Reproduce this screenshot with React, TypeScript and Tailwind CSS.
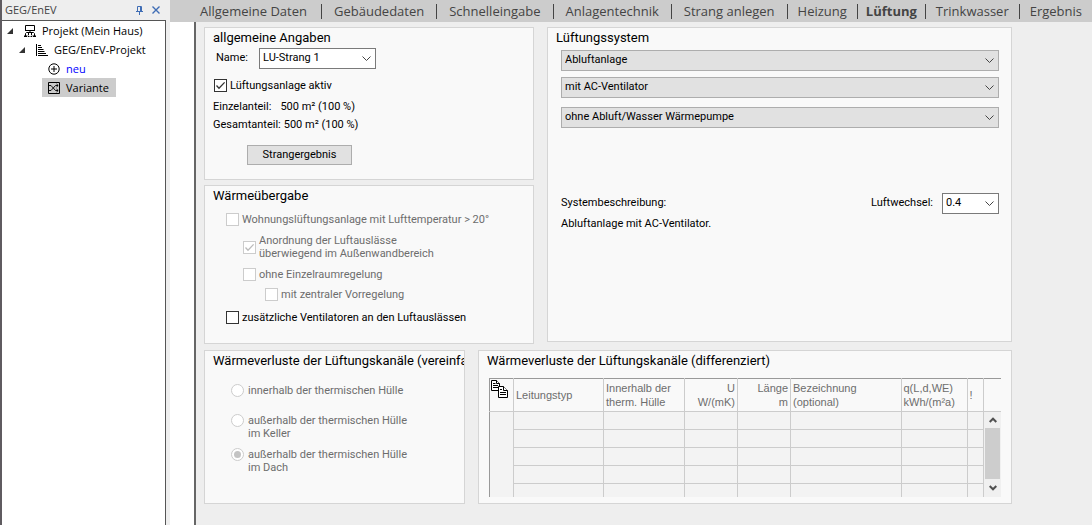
import { useState } from "react";
import type { ReactNode } from "react";
import clsx from "clsx";

const tabs = [
  { name: "Allgemeine Daten", pad: "pr-[14px]" },
  { name: "Gebäudedaten", pad: "px-3" },
  { name: "Schnelleingabe", pad: "px-3" },
  { name: "Anlagentechnik", pad: "px-3" },
  { name: "Strang anlegen", pad: "px-3" },
  { name: "Heizung", pad: "px-[10px]" },
  { name: "Lüftung", pad: "px-2" },
  { name: "Trinkwasser", pad: "px-[10px]" },
  { name: "Ergebnis", pad: "px-[10px]" },
];

function Panel({
  title,
  className,
  children,
}: {
  title: string;
  className?: string;
  children: ReactNode;
}) {
  return (
    <section
      className={clsx(
        "overflow-hidden border border-[#d5d5d5] bg-[#f9f9f9] px-2",
        className
      )}
    >
      <h2 className="text-[13px] leading-5 whitespace-nowrap">{title}</h2>
      {children}
    </section>
  );
}

function Select({
  id,
  label,
  options,
  className,
}: {
  id: string;
  label?: string;
  options: string[];
  className?: string;
}) {
  return (
    <span className={clsx("grid h-[21px] items-center border", className)}>
      <select
        id={id}
        aria-label={label}
        className="col-start-1 row-start-1 h-full w-full appearance-none bg-transparent pr-5 pl-[3px] outline-none"
      >
        {options.map((o) => (
          <option key={o}>{o}</option>
        ))}
      </select>
      <svg
        width="9"
        height="5"
        viewBox="0 0 9 5"
        className="pointer-events-none col-start-1 row-start-1 mr-1 justify-self-end"
        fill="none"
        stroke="#444"
      >
        <path d="M0.5 0.5 4.5 4.5 8.5 0.5" />
      </svg>
    </span>
  );
}

function Checkbox({
  label,
  checked,
  disabled,
  className,
}: {
  label: ReactNode;
  checked?: boolean;
  disabled?: boolean;
  className?: string;
}) {
  return (
    <label
      className={clsx(
        "flex items-center gap-[3px] leading-[13px]",
        disabled && "text-[#6d6d6d]",
        className
      )}
    >
      <span className="grid shrink-0 place-items-center">
        <input
          type="checkbox"
          defaultChecked={checked}
          disabled={disabled}
          className="peer col-start-1 row-start-1 size-[13px] appearance-none border border-[#333] bg-white disabled:border-[#ccc]"
        />
        <svg
          width="13"
          height="13"
          viewBox="0 0 13 13"
          className="pointer-events-none invisible col-start-1 row-start-1 text-[#333] peer-checked:visible peer-disabled:text-[#bbb]"
          fill="none"
          stroke="currentColor"
          strokeWidth="1.3"
        >
          <path d="M2.5 6.5 5 9.2 10.6 3.4" />
        </svg>
      </span>
      <span>{label}</span>
    </label>
  );
}

function Radio({
  label,
  checked,
  className,
}: {
  label: ReactNode;
  checked?: boolean;
  className?: string;
}) {
  return (
    <label
      className={clsx(
        "flex items-start gap-1 leading-[13px] text-[#6d6d6d]",
        className
      )}
    >
      <span className="grid shrink-0 place-items-center">
        <input
          type="radio"
          name="kanal"
          defaultChecked={checked}
          disabled
          className="peer col-start-1 row-start-1 size-[13px] appearance-none rounded-full border border-[#ccc] bg-white"
        />
        <span className="invisible col-start-1 row-start-1 size-[7px] rounded-full bg-[#c4c4c4] peer-checked:visible" />
      </span>
      <span>{label}</span>
    </label>
  );
}

function Expander() {
  return (
    <svg width="6" height="6" viewBox="0 0 6 6" className="shrink-0">
      <path d="M6 0V6H0Z" fill="#333" />
    </svg>
  );
}

function ProjectIcon() {
  return (
    <svg
      width="12"
      height="12"
      viewBox="0 0 12 12"
      fill="none"
      stroke="#000"
      className="shrink-0"
    >
      <path d="M1.5 6V0.5H10.5V6M1 5.5H11M6 5.5V7.5M1.5 10V8.5L2.5 7.5H9.5L10.5 8.5V10M4.5 10V7.5M7.5 10V7.5" />
      <path d="M0 11.5H3M4 10.5V11.5H5.5M6.5 11.5H8V10.5M9 11.5H12M0.5 10.5H2.5M9.5 10.5H11.5" />
    </svg>
  );
}

function StairsIcon() {
  return (
    <svg
      width="12"
      height="12"
      viewBox="0 0 12 12"
      fill="none"
      stroke="#000"
      className="shrink-0"
    >
      <path d="M0.5 0V12M2 1.5H5M2 3.5H6M2 5.5H7.5M2 7.5H8.5M2 9.5H10M2 11.5H12" />
    </svg>
  );
}

function AddIcon() {
  return (
    <svg
      width="12"
      height="12"
      viewBox="0 0 12 12"
      fill="none"
      stroke="#000"
      className="shrink-0"
    >
      <circle cx="6" cy="6" r="5.2" />
      <path d="M6 3V9M3 6H9" />
    </svg>
  );
}

function VariantIcon() {
  return (
    <svg
      width="12"
      height="12"
      viewBox="0 0 12 12"
      fill="none"
      stroke="#000"
      className="shrink-0"
    >
      <path d="M0.5 0.5H11.5V11.5H0.5Z" />
      <path
        d="M1 3.5H3L7.5 8.5H10M1 8.5H3L7.5 3.5H10M8.5 2 10.2 3.5 8.5 5M8.5 7 10.2 8.5 8.5 10"
        strokeWidth="0.9"
      />
    </svg>
  );
}

function CopyIcon() {
  return (
    <svg
      width="18"
      height="18"
      viewBox="0 0 18 18"
      fill="#fff"
      stroke="#000"
      className="mt-px ml-px"
    >
      <path d="M0.5 0.5H5.5L8.5 3.5V10.5H0.5Z" />
      <path d="M5.5 0.5V3.5H8.5M2 3.5H4.5M2 5.5H7M2 7.5H7" />
      <path d="M7.5 6.5H12.5L16.5 10.5V17.5H7.5Z" />
      <path d="M12.5 6.5V10.5H16.5M9 9.5H11M9 12.5H15M9 14.5H15" />
    </svg>
  );
}

function Sidebar() {
  return (
    <aside className="flex w-[170px] shrink-0 flex-col border-l-2 border-[#5f5b60] bg-[#eee] pr-1 font-['Open_Sans','Noto_Sans',sans-serif] text-[11px]">
      <header className="flex h-5 items-center pr-[6px] pl-[3px] text-[#444]">
        <h1 className="flex-1">GEG/EnEV</h1>
        <button type="button" aria-label="Anheften">
          <svg
            width="7"
            height="9"
            viewBox="0 0 7 9"
            fill="none"
            stroke="#3f6db5"
          >
            <path d="M1.5 5.5V0.5H5.5V5.5M4.5 0.5V5.5M0 5.5H7M3.5 5.5V9" />
          </svg>
        </button>
        <button type="button" aria-label="Schließen" className="ml-[9px]">
          <svg
            width="8"
            height="8"
            viewBox="0 0 8 8"
            fill="none"
            stroke="#3f6db5"
            strokeWidth="1.4"
          >
            <path d="M0.5 0.5 7.5 7.5M7.5 0.5 0.5 7.5" />
          </svg>
        </button>
      </header>
      <ul className="flex-1 border-t border-r border-[#555] bg-white leading-[19px]">
        <li className="flex items-center pl-[5px]">
          <Expander />
          <span className="ml-[11px] flex items-center gap-[6px]">
            <ProjectIcon />
            Projekt (Mein Haus)
          </span>
        </li>
        <li className="flex items-center pl-[17px]">
          <Expander />
          <span className="ml-[11px] flex items-center gap-[6px]">
            <StairsIcon />
            GEG/EnEV-Projekt
          </span>
        </li>
        <li className="flex items-center gap-[6px] pl-[46px] text-[#00f]">
          <AddIcon />
          neu
        </li>
        <li className="ml-10 flex w-[74px] items-center gap-[6px] bg-[#ccc] pl-[6px]">
          <VariantIcon />
          Variante
        </li>
      </ul>
    </aside>
  );
}

function TabBar() {
  const [active, setActive] = useState("Lüftung");
  return (
    <nav className="flex h-[22px] items-center bg-[#ccc] pl-[30px]">
      {tabs.map(({ name, pad }) => (
        <button
          key={name}
          type="button"
          onClick={() => setActive(name)}
          className={clsx(
            "border-l border-[#444] font-['Open_Sans','Noto_Sans',sans-serif] text-[13px] leading-[15px] whitespace-nowrap text-[#444] first:border-l-0",
            pad,
            name === active && "font-bold"
          )}
        >
          {name}
        </button>
      ))}
    </nav>
  );
}

function DuctTable() {
  const head = "border-r border-b border-[#ccc] px-[2px] font-normal";
  const cell = "border-r border-b border-[#ccc]";
  return (
    <table className="w-full table-fixed border-collapse border-t border-l border-[#999] bg-[#f3f3f3] font-['Liberation_Sans',sans-serif] text-[11px] leading-[14px] text-[#6d6d6d]">
      <colgroup>
        <col className="w-6" />
        <col className="w-[90px]" />
        <col className="w-[81px]" />
        <col className="w-[53px]" />
        <col className="w-[53px]" />
        <col />
        <col className="w-[66px]" />
        <col className="w-4" />
        <col className="w-[18px]" />
      </colgroup>
      <thead>
        <tr className="h-[33px] bg-[#f9f9f9] text-left">
          <th className="border-r border-b border-[#ccc] p-0 align-top">
            <button type="button" aria-label="Kopieren" className="block">
              <CopyIcon />
            </button>
          </th>
          <th className={head}>Leitungstyp</th>
          <th className={head}>
            Innerhalb der
            <br />
            therm. Hülle
          </th>
          <th className={clsx(head, "text-right")}>
            U<br />
            W/(mK)
          </th>
          <th className={clsx(head, "text-right")}>
            Länge
            <br />m
          </th>
          <th className={head}>
            Bezeichnung
            <br />
            (optional)
          </th>
          <th className={head}>
            q(L,d,WE)
            <br />
            kWh/(m²a)
          </th>
          <th className={head}>!</th>
          <th className="border-b border-[#ccc]" />
        </tr>
      </thead>
      <tbody>
        {[0, 1, 2, 3, 4].map((row) => (
          <tr key={row} className="h-[18px] last:h-[13px] last:*:border-b-0">
            {row === 0 && <td rowSpan={5} className="border-r border-[#ccc]" />}
            <td className={cell} />
            <td className={cell} />
            <td className={cell} />
            <td className={cell} />
            <td className={cell} />
            <td className={cell} />
            <td className={cell} />
            {row === 0 && (
              <td rowSpan={5} className="bg-[#f0f0f0] p-0 pl-px">
                <div className="flex h-[84px] flex-col items-center">
                  <button
                    type="button"
                    aria-label="Nach oben"
                    className="flex h-4 items-center"
                  >
                    <svg
                      width="8"
                      height="6"
                      viewBox="0 0 8 6"
                      fill="none"
                      stroke="#505050"
                      strokeWidth="2"
                    >
                      <path d="M0.7 5 4 1.7 7.3 5" />
                    </svg>
                  </button>
                  <div className="w-[15px] flex-1 bg-[#cdcdcd]" />
                  <button
                    type="button"
                    aria-label="Nach unten"
                    className="flex h-[17px] items-center"
                  >
                    <svg
                      width="8"
                      height="6"
                      viewBox="0 0 8 6"
                      fill="none"
                      stroke="#505050"
                      strokeWidth="2"
                    >
                      <path d="M0.7 1 4 4.3 7.3 1" />
                    </svg>
                  </button>
                </div>
              </td>
            )}
          </tr>
        ))}
      </tbody>
    </table>
  );
}

export default function App() {
  return (
    <div className="flex min-h-screen bg-[#eee] font-['Roboto','Open_Sans',sans-serif] text-[11px] text-black">
      <Sidebar />
      <div className="flex min-w-0 flex-1 flex-col">
        <TabBar />
        <div className="flex flex-1">
          <div className="w-[26px] shrink-0 border-r-2 border-[#666] bg-white" />
          <main className="min-w-0 flex-1 pt-[5px] pr-20 pl-2">
            <div className="flex gap-[13px]">
              <div className="flex w-[330px] shrink-0 flex-col gap-[5px]">
                <Panel title="allgemeine Angaben" className="h-[153px]">
                  <div className="flex items-center pl-[3px]">
                    <label htmlFor="name" className="w-[43px]">
                      Name:
                    </label>
                    <Select
                      id="name"
                      options={["LU-Strang 1"]}
                      className="w-[117px] border-[#7a7a7a] bg-white"
                    />
                  </div>
                  <Checkbox
                    label="Lüftungsanlage aktiv"
                    checked
                    className="mt-[10px] pl-px"
                  />
                  <dl className="mt-[6px] leading-[18px]">
                    <div className="flex gap-[9px]">
                      <dt>Einzelanteil:</dt>
                      <dd>500 m² (100 %)</dd>
                    </div>
                    <div className="flex gap-[3px]">
                      <dt>Gesamtanteil:</dt>
                      <dd>500 m² (100 %)</dd>
                    </div>
                  </dl>
                  <button
                    type="button"
                    className="mt-[11px] ml-[34px] block h-5 w-[105px] border border-[#adadad] bg-[#e1e1e1] leading-[18px]"
                  >
                    Strangergebnis
                  </button>
                </Panel>
                <Panel title="Wärmeübergabe" className="h-[159px]">
                  <Checkbox
                    disabled
                    label="Wohnungslüftungsanlage mit Lufttemperatur > 20°"
                    className="mt-[7px] pl-[13px]"
                  />
                  <Checkbox
                    disabled
                    checked
                    label={
                      <>
                        Anordnung der Luftauslässe
                        <br />
                        überwiegend im Außenwandbereich
                      </>
                    }
                    className="mt-2 pl-[30px]"
                  />
                  <Checkbox
                    disabled
                    label="ohne Einzelraumregelung"
                    className="mt-2 pl-[30px]"
                  />
                  <Checkbox
                    disabled
                    label="mit zentraler Vorregelung"
                    className="mt-[7px] pl-[52px]"
                  />
                  <Checkbox
                    label="zusätzliche Ventilatoren an den Luftauslässen"
                    className="mt-[10px] pl-[13px]"
                  />
                </Panel>
              </div>
              <Panel title="Lüftungssystem" className="h-[315px] flex-1">
                <div className="mt-[2px] flex flex-col pr-1 pl-[5px]">
                  <Select
                    id="anlage"
                    label="Anlage"
                    options={["Abluftanlage"]}
                    className="border-[#adadad] bg-[#e1e1e1]"
                  />
                  <Select
                    id="ventilator"
                    label="Ventilator"
                    options={["mit AC-Ventilator"]}
                    className="mt-[6px] border-[#adadad] bg-[#e1e1e1]"
                  />
                  <Select
                    id="waermepumpe"
                    label="Wärmepumpe"
                    options={["ohne Abluft/Wasser Wärmepumpe"]}
                    className="mt-[9px] border-[#adadad] bg-[#e1e1e1]"
                  />
                  <div className="mt-[65px] flex items-center">
                    <span className="flex-1">Systembeschreibung:</span>
                    <label htmlFor="luftwechsel" className="mr-[9px]">
                      Luftwechsel:
                    </label>
                    <Select
                      id="luftwechsel"
                      options={["0.4"]}
                      className="w-[57px] border-[#7a7a7a] bg-white"
                    />
                  </div>
                  <p className="mt-[2px]">Abluftanlage mit AC-Ventilator.</p>
                </div>
              </Panel>
            </div>
            <div className="mt-[6px] flex gap-[13px]">
              <Panel
                title="Wärmeverluste der Lüftungskanäle (vereinfa"
                className="h-[154px] w-[261px] shrink-0"
              >
                <Radio
                  label="innerhalb der thermischen Hülle"
                  className="mt-[13px] pl-[18px]"
                />
                <Radio
                  label={
                    <>
                      außerhalb der thermischen Hülle
                      <br />
                      im Keller
                    </>
                  }
                  className="mt-[17px] pl-[18px]"
                />
                <Radio
                  checked
                  label={
                    <>
                      außerhalb der thermischen Hülle
                      <br />
                      im Dach
                    </>
                  }
                  className="mt-2 pl-[18px]"
                />
              </Panel>
              <Panel
                title="Wärmeverluste der Lüftungskanäle (differenziert)"
                className="h-[154px] flex-1"
              >
                <div className="mt-[7px] mr-[2px] ml-[2px]">
                  <DuctTable />
                </div>
              </Panel>
            </div>
          </main>
        </div>
      </div>
    </div>
  );
}
